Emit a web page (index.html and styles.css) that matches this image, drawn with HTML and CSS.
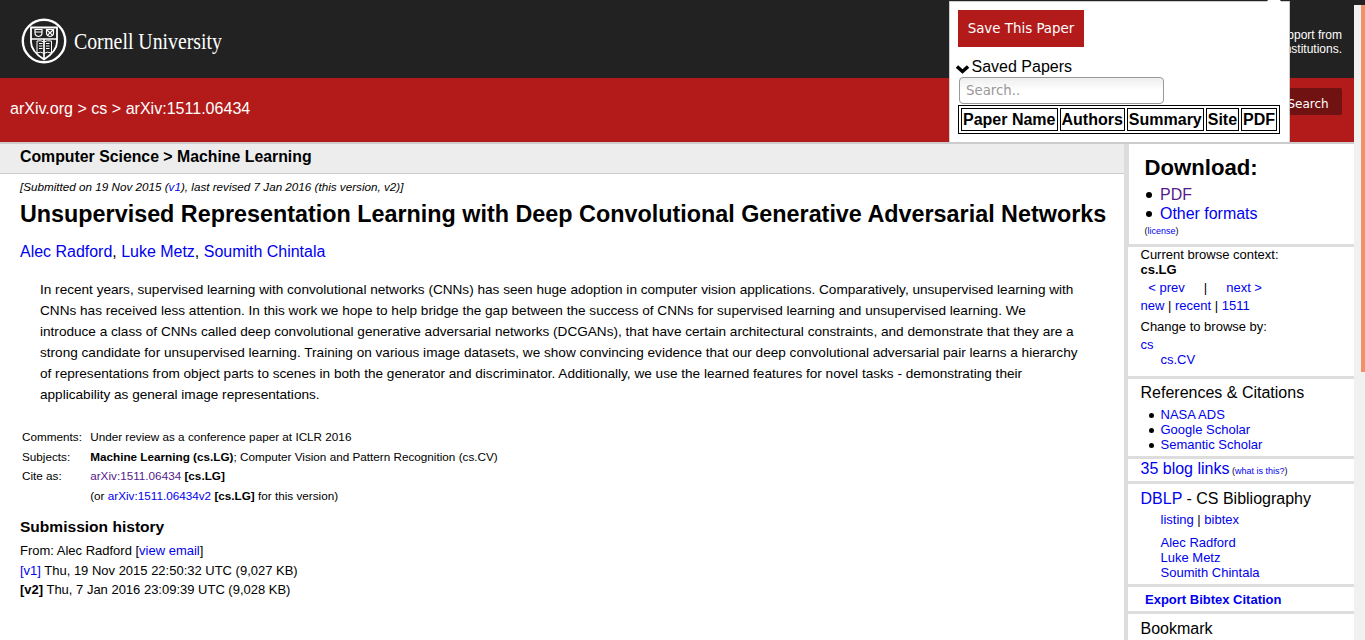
FILE: index.html
```html
<!DOCTYPE html>
<html lang="en">
<head>
<meta charset="utf-8">
<title>Unsupervised Representation Learning</title>
<link rel="stylesheet" href="styles.css">
</head>
<body>
<div class="page">
  <header class="top">
    <svg class="seal" width="46" height="46" viewBox="0 0 46 46" fill="none" stroke="#fff">
      <circle cx="23" cy="23" r="21.2" stroke-width="2.4"/>
      <path d="M10 9.500H36V24C36 32 30 37 23 41.500C16 37 10 32 10 24Z" stroke-width="1.8"/>
      <path d="M10 21H36M23 21V41" stroke-width="1.7"/>
      <path d="M14 11.500H21V15Q21 18 17.500 18.500Q14 18 14 15ZM14 14H21M25.500 11.500H32.500V15Q32.500 18 29 18.500Q25.500 18 25.500 15ZM26 12L29 15L32 12M27 17L29 14.500L31 17" stroke-width="1.2"/>
      <path d="M16 23Q20 22 23 24Q26 22 30.500 23V35Q26 33 23 35.500Q20 33 16 35ZM18 25.500H21.500M18 28H21.500M18 30.500H21.500M25 25.500H28.500M25 28H28.500M25 30.500H28.500"/>
    </svg>
    <svg class="wordmark" width="156" height="34" viewBox="0 0 156 34"><text x="0" y="22" textLength="148" lengthAdjust="spacingAndGlyphs">Cornell University</text></svg>
    <p class="support">We gratefully acknowledge support from<br>the Simons Foundation and member institutions.</p>
  </header>
  <div class="crumbs"><span>arXiv.org &gt; cs &gt; arXiv:1511.06434</span><button class="search-btn">Search</button></div>
  <div class="columns">
    <main class="main">
      <div class="subject">Computer Science &gt; Machine Learning</div>
      <div class="dateline">[Submitted on 19 Nov 2015 (<a>v1</a>), last revised 7 Jan 2016 (this version, v2)]</div>
      <h1 class="title">Unsupervised Representation Learning with Deep Convolutional Generative Adversarial Networks</h1>
      <div class="authors"><a>Alec Radford</a>, <a>Luke Metz</a>, <a>Soumith Chintala</a></div>
      <p class="abstract">In recent years, supervised learning with convolutional networks (CNNs) has seen huge adoption in computer vision applications. Comparatively, unsupervised learning with<br>CNNs has received less attention. In this work we hope to help bridge the gap between the success of CNNs for supervised learning and unsupervised learning. We<br>introduce a class of CNNs called deep convolutional generative adversarial networks (DCGANs), that have certain architectural constraints, and demonstrate that they are a<br>strong candidate for unsupervised learning. Training on various image datasets, we show convincing evidence that our deep convolutional adversarial pair learns a hierarchy<br>of representations from object parts to scenes in both the generator and discriminator. Additionally, we use the learned features for novel tasks - demonstrating their<br>applicability as general image representations.</p>
      <div class="meta">
        <span>Comments:</span><span>Under review as a conference paper at ICLR 2016</span>
        <span>Subjects:</span><span><b>Machine Learning (cs.LG)</b>; Computer Vision and Pattern Recognition (cs.CV)</span>
        <span>Cite as:</span><span><a class="visited">arXiv:1511.06434</a> <b>[cs.LG]</b></span>
        <span></span><span>(or <a>arXiv:1511.06434v2</a> <b>[cs.LG]</b> for this version)</span>
      </div>
      <h2 class="history-title">Submission history</h2>
      <div class="history">From: Alec Radford [<a>view email</a>]<br><a>[v1]</a> Thu, 19 Nov 2015 22:50:32 UTC (9,027 KB)<br><b>[v2]</b> Thu, 7 Jan 2016 23:09:39 UTC (9,028 KB)</div>
    </main>
    <aside class="side">
      <section class="download">
        <h2>Download:</h2>
        <ul><li><a class="visited">PDF</a></li><li><a>Other formats</a></li></ul>
        <div class="license">(<a>license</a>)</div>
      </section>
      <section class="browse">
        <div>Current browse context:</div>
        <div><b>cs.LG</b></div>
        <div class="prevnext"><a>&lt; prev</a><span>|</span><a>next &gt;</a></div>
        <div class="lists"><a>new</a> | <a>recent</a> | <a>1511</a></div>
        <div class="change">Change to browse by:</div>
        <div class="cs"><a>cs</a></div>
        <div class="indent"><a>cs.CV</a></div>
      </section>
      <section class="refs">
        <h3>References &amp; Citations</h3>
        <ul><li><a>NASA ADS</a></li><li><a>Google Scholar</a></li><li><a>Semantic Scholar</a></li></ul>
      </section>
      <section class="blog"><h3><a>35 blog links</a> <small>(<a>what is this?</a>)</small></h3></section>
      <section class="dblp">
        <h3><a>DBLP</a> - CS Bibliography</h3>
        <div class="indent listing"><a>listing</a> | <a>bibtex</a></div>
        <div class="indent"><a>Alec Radford</a><br><a>Luke Metz</a><br><a>Soumith Chintala</a></div>
      </section>
      <section class="export"><a>Export Bibtex Citation</a></section>
      <section class="bookmark"><h3>Bookmark</h3></section>
    </aside>
  </div>
</div>
<div class="scroll"><div class="thumb"></div></div>
<div class="shade"></div>
<div class="popup">
  <div class="notch"></div>
  <button class="save">Save This Paper</button>
  <div class="saved"><svg width="13" height="9" viewBox="0 0 13 9"><path d="M1 1.500L6.500 6.500L12 1.500" fill="none" stroke="#000" stroke-width="3.400"/></svg><span>Saved Papers</span></div>
  <input class="filter" placeholder="Search..">
  <table class="papers"><tr><th>Paper Name</th><th>Authors</th><th>Summary</th><th>Site</th><th>PDF</th></tr></table>
</div>
</body>
</html>
```

FILE: styles.css
```css
* { box-sizing: border-box; }
body { margin: 0; height: 640px; display: flex; overflow: hidden; background: #fff; color: #000; font: 13px/15px "Liberation Sans", Arial, sans-serif; }
h1, h2, h3, p, ul { margin: 0; padding: 0; }
a { color: #00e; }
a.visited { color: #551a8b; }
.page { width: 1354px; height: 640px; overflow: hidden; }

.top { height: 78px; background: #222; display: flex; align-items: flex-start; padding: 18px 12px 0 21px; color: #fff; }
.seal { flex: none; }
.wordmark { margin: 9px 0 0 7px; flex: none; overflow: visible; }
.wordmark text { font: 22.500px "Liberation Serif", serif; fill: #fff; }
.support { margin: 10px 0 0 auto; text-align: right; font-size: 12px; line-height: 14px; }
.crumbs { height: 64px; background: #b31b1b; color: #fff; display: flex; justify-content: space-between; padding: 10px 12px 0 10px; font-size: 16.060px; }
.crumbs span { line-height: 38px; }
.search-btn { width: 68px; height: 27px; border: 0; border-radius: 2px; background: #701112; color: #fff; font: 12px "DejaVu Sans", sans-serif; padding: 4px 0 0; }
.columns { display: flex; height: 498px; border-top: 2px solid #ccc; }

.main { width: 1124px; }
.subject { height: 30px; background: #ededed; border-bottom: 1px solid #ccc; padding-left: 20px; font-size: 15.840px; line-height: 26px; font-weight: bold; }
.dateline { padding-left: 20px; height: 26px; line-height: 25px; font-size: 11.680px; font-style: italic; }
.title { padding-left: 20px; font-size: 23.350px; line-height: 28px; white-space: nowrap; }
.authors { padding: 14px 0 0 20px; font-size: 15.970px; line-height: 20px; }
.abstract { padding: 17px 0 0 40px; font-size: 13.600px; line-height: 21px; white-space: nowrap; }
.meta { padding: 22px 0 0 22px; display: grid; grid-template-columns: 68.2px 1fr; grid-auto-rows: 19.600px; font-size: 11.730px; line-height: 20px; }
.history-title { padding: 11px 0 0 20px; font-size: 15.550px; line-height: 22px; }
.history { padding: 2.700px 0 0 20px; font-size: 12.990px; line-height: 19.500px; }

.side { width: 230px; border-left: 4px solid #ddd; white-space: nowrap; }
.side section { border-bottom: 3px solid #ddd; padding-left: 12.500px; overflow: hidden; }
.side h3 { font-size: 16px; font-weight: normal; line-height: 18px; }
.side li { list-style: none; position: relative; }
.side li::before { content: ""; position: absolute; left: -11.500px; top: 6px; width: 5px; height: 5px; border-radius: 50%; background: #000; }
.side .download { height: 103px; border-left: 1px solid #ddd; padding: 10px 0 0 15.500px; }
.download h2 { font-size: 22.150px; line-height: 28px; }
.download ul { font-size: 15.950px; line-height: 19px; padding: 3px 0 0 15.500px; }
.side .download li::before { left: -14px; top: 7px; width: 6px; height: 6px; }
.license { font-size: 9px; line-height: 12px; padding-top: 2px; }
.browse { height: 132px; }
.prevnext { display: flex; gap: 19px; padding: 3px 0 3px 7.800px; }
.lists { padding-bottom: 3px; }
.change { padding-top: 3px; }
.cs { padding-top: 3px; }
.indent { padding-left: 20px; }
.refs { height: 80px; padding-top: 5px; }
.refs ul { padding: 5px 0 0 20px; }
.blog { height: 25px; padding-top: 1px; }
.blog small { font-size: 9px; margin-left: -2px; }
.dblp { height: 103px; padding-top: 6px; }
.dblp .listing { padding-top: 4px; padding-bottom: 8px; }
.side .export { height: 27px; padding: 5px 0 0 17px; font-weight: bold; }
.side .bookmark { padding-top: 6px; height: 40px; }

.crumbs span { padding-top: 1px; }

.scroll { width: 11px; background: #f1f1f0; padding-left: 7px; }
.thumb { height: 372px; background: #f29169; }
.shade { position: absolute; left: 1290px; top: 0; width: 75px; height: 5px; background: #222; }

.popup { position: absolute; left: 949px; top: 1px; width: 341px; height: 141px; background: #fff; border: 1px solid #ccc; border-bottom: 0; padding: 8px 8px 0; font-size: 16px; }
.notch { position: absolute; left: 316px; top: -2px; width: 16px; height: 3px; background: #fff; clip-path: polygon(2px 0, 14px 0, 16px 100%, 0 100%); }
.save { display: block; width: 126px; height: 37px; border: 0; background: #b31b1b; color: #fff; font: 13.400px "DejaVu Sans", sans-serif; padding: 0; }
.saved { height: 30px; display: flex; margin-left: -2px; padding-top: 11px; gap: 2.500px; line-height: 18px; }
.saved svg { margin-top: 7px; }
.filter { display: block; margin-left: 1px; width: 205px; height: 27px; border: 1px solid #999; border-radius: 4px; background: linear-gradient(#eee, #fff 50%); padding: 0 6px; font: 13.333px "DejaVu Sans", sans-serif; }
.filter::placeholder { color: #999; }
.papers { margin-top: 1px; border: 1px solid #000; border-spacing: 2px; width: 322px; height: 29px; line-height: 19px; }
.papers th { border: 1px solid #000; padding: 1px; white-space: nowrap; }
```
